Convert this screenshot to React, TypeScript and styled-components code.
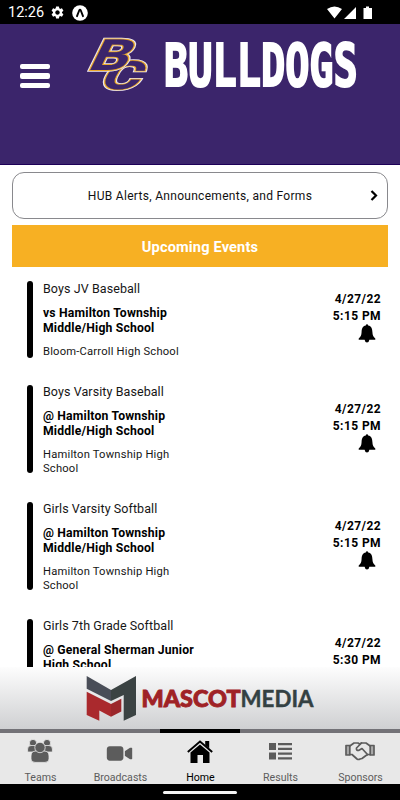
import React from "react";
import styled, { createGlobalStyle } from "styled-components";
import { MdSettings } from "react-icons/md";
import { IoIosVideocam } from "react-icons/io";

const GlobalStyle = createGlobalStyle`
  * { box-sizing: border-box; }
  body { margin: 0; background: #fff; }
`;

const Screen = styled.div`
  width: 400px;
  height: 800px;
  display: flex;
  flex-direction: column;
  overflow: hidden;
  background: #fff;
  color: #000;
  font-family: Roboto, "Liberation Sans", sans-serif;
`;

const StatusBar = styled.div`
  height: 24px;
  flex: none;
  display: flex;
  align-items: center;
  gap: 7px;
  padding: 1px 27px 0 8px;
  background: #000;
  color: #fff;
`;

const Clock = styled.span`
  width: 35px;
  font-size: 14.5px;
  line-height: 24px;
  white-space: nowrap;
`;

const StatusIcons = styled.svg`
  margin-left: auto;
`;

const Header = styled.header`
  height: 141px;
  flex: none;
  display: flex;
  align-items: flex-start;
  background: #3b256b;
  border-bottom: 1px solid #1d0057;
`;

const MenuButton = styled.button`
  display: flex;
  flex-direction: column;
  gap: 4px;
  margin: 39.5px 0 0 20px;
  padding: 0;
  border: 0;
  background: none;
`;

const MenuLine = styled.span`
  width: 30px;
  height: 5.6px;
  border-radius: 2px;
  background: #fff;
`;

const Brand = styled.svg`
  margin-left: 30px;
`;

const Content = styled.main`
  flex: 1;
  min-height: 0;
  overflow: hidden;
  padding: 7px 12px 0;
`;

const AlertLink = styled.div`
  height: 47px;
  display: flex;
  align-items: center;
  justify-content: center;
  border: 1px solid #89898d;
  border-radius: 12px;
  padding: 1px 9px 0 10px;
  font-size: 12px;
  letter-spacing: 0.3px;
  color: #111;
`;

const AlertLabel = styled.span`
  flex: 1;
  padding-left: 7px;
  text-align: center;
`;

const SectionTitle = styled.h2`
  height: 42px;
  margin: 6px 0 1px;
  background: #f7b023;
  color: #fff;
  text-align: center;
  font-size: 14.6px;
  font-weight: 700;
  line-height: 44px;
  letter-spacing: 0.15px;
`;

const EventRow = styled.article<{ $height: number }>`
  height: ${(p) => p.$height}px;
  display: flex;
  align-items: center;
  padding: 0 7px 0 15px;
`;

const EventBar = styled.div`
  width: 5.5px;
  height: 74.8%;
  border-radius: 3px;
  background: #000;
`;

const EventInfo = styled.div`
  width: 166px;
  align-self: flex-start;
  padding: 13.2px 0 0 10.5px;
`;

const Team = styled.div`
  font-size: 12.5px;
  line-height: 16px;
  letter-spacing: 0.08px;
  color: #161616;
`;

const Opponent = styled.div`
  margin-top: 9px;
  font-size: 12.2px;
  font-weight: 700;
  line-height: 15px;
  letter-spacing: 0.18px;
  white-space: pre-line;
`;

const Venue = styled.div`
  margin-top: 9px;
  font-size: 11.2px;
  line-height: 14px;
  letter-spacing: 0.2px;
  color: #161616;
  white-space: pre-line;
`;

const EventTime = styled.div`
  margin-left: auto;
  display: flex;
  flex-direction: column;
  align-items: flex-end;
  padding-bottom: 2px;
  font-size: 12px;
  font-weight: 700;
  line-height: 17px;
  letter-spacing: 0.42px;
`;

const BellIcon = styled.svg`
  margin: -1px 5px 3px 0;
`;

const Sponsor = styled.div`
  height: 62px;
  flex: none;
  background: linear-gradient(#fdfdfd, #cfd0d2);
`;

const TabBar = styled.nav`
  height: 55px;
  flex: none;
  display: grid;
  grid-template-columns: repeat(5, 1fr);
  background: #e8e8e8;
`;

const Tab = styled.div<{ $active?: boolean }>`
  display: flex;
  flex-direction: column;
  align-items: center;
  border-top: 4px solid ${(p) => (p.$active ? "#000" : "#737277")};
  color: ${(p) => (p.$active ? "#000" : "#5c5c5c")};
  font-size: 10.6px;
  letter-spacing: 0;
`;

const TabIcon = styled.div`
  height: 36px;
  display: flex;
  align-items: center;
`;

const WideTabIcon = styled(TabIcon)`
  margin-left: -2px;
  padding-top: 4px;
`;

const TabLabel = styled.span`
  padding-left: 1px;
  line-height: 17px;
`;

const SystemNav = styled.div`
  height: 16px;
  flex: none;
  display: flex;
  justify-content: center;
  align-items: center;
  background: #000;
`;

const HomePill = styled.div`
  width: 74px;
  height: 3px;
  margin-top: 1px;
  border-radius: 2px;
  background: #f4f4f4;
`;

const events = [
  { team: "Boys JV Baseball", opponent: "vs Hamilton Township\nMiddle/High School", venue: "Bloom-Carroll High School", time: "5:15 PM", height: 102.5 },
  { team: "Boys Varsity Baseball", opponent: "@ Hamilton Township\nMiddle/High School", venue: "Hamilton Township High\nSchool", time: "5:15 PM", height: 117 },
  { team: "Girls Varsity Softball", opponent: "@ Hamilton Township\nMiddle/High School", venue: "Hamilton Township High\nSchool", time: "5:15 PM", height: 117 },
  { team: "Girls 7th Grade Softball", opponent: "@ General Sherman Junior\nHigh School", venue: "General Sherman Junior\nHigh School", time: "5:30 PM", height: 117 },
];

const ExpoBadge = () => (
  <svg width="16" height="16" viewBox="0 0 16 16">
    <circle cx="8" cy="8" r="7.8" fill="#fff" />
    <path d="M5 11.200 7.200 5.500Q8 4 8.800 5.500L11 11.200" fill="none" stroke="#000" strokeWidth="1.900" strokeLinecap="round" strokeLinejoin="round" />
  </svg>
);

const Bell = () => (
  <BellIcon width="18" height="19" viewBox="0 0 18 19">
    <path d="M9 .3Q10 .3 10.200 1.400C13.500 2 14.300 4.800 14.400 8C14.500 11.500 15.500 13 17.300 14.400V15.800H.7V14.400C2.500 13 3.500 11.500 3.600 8C3.700 4.800 4.500 2 7.800 1.400Q8 .3 9 .3ZM6.600 15.800H11.400Q11 18.500 9 18.500Q7 18.500 6.600 15.800Z" />
  </BellIcon>
);

const Monogram = ({ letter, transform }: { letter: string; transform: string }) => (
  <g transform={transform} fontFamily="Roboto, sans-serif" fontWeight="700" fontSize="42" strokeLinejoin="miter">
    <text fill="#ece6ee" stroke="#ece6ee" strokeWidth="3.6">{letter}</text>
    <text fill="#eaa92c" stroke="#eaa92c" strokeWidth="2">{letter}</text>
    <text fill="#3b256b" stroke="#3b256b" strokeWidth="0.2">{letter}</text>
  </g>
);

const TeamsIcon = () => (
  <svg width="26" height="24" viewBox="0 0 26 24" fill="#5c5c5c" stroke="#e8e8e8" strokeWidth="0.8">
    <circle cx="6" cy="4" r="3.6" />
    <circle cx="20" cy="4" r="3.6" />
    <path d="M.6 13V10Q.6 6.500 4 6.500H9V13Z" />
    <path d="M25.400 13V10Q25.400 6.500 22 6.500H17V13Z" />
    <path d="M4 20V17Q4 12 9 12H17Q22 12 22 17V20Q22 23.400 18 23.400H8Q4 23.400 4 20Z" />
    <circle cx="13" cy="8.500" r="5.200" />
  </svg>
);

const HomeIcon = () => (
  <svg width="26" height="28" viewBox="0 -2 26 28">
    <path d="M3.500 24V13.500L13 5.500 22.500 13.500V24H16V16H10.500V24Z" />
    <path d="M.8 13 13 2.500 25.200 13" fill="none" stroke="#000" strokeWidth="1.900" />
    <path d="M18.200 2H22.200V9.500L18.200 6Z" />
  </svg>
);

const ResultsIcon = () => (
  <svg width="23" height="17" viewBox="0 0 23 17" fill="#5c5c5c">
    <path d="M0 0H7V7H0ZM0 9.500H7V16.500H0ZM9 0H23V2.200H9ZM9 4.800H23V7H9ZM9 9.500H23V11.700H9ZM9 14.300H23V16.500H9Z" />
  </svg>
);

const SponsorsIcon = () => (
  <svg width="30" height="20" viewBox="0 0 30 20" fill="none" stroke="#5c5c5c" strokeWidth="1.700" strokeLinejoin="round" strokeLinecap="round">
    <path d="M1 4.500H4.800V14H1ZM29 4.500H25.200V14H29Z" fill="#a9a9a9" />
    <path d="M4.800 5 9 2H13L14.500 3 16.500 2H21L25.200 5M4.800 13.500H7L12 18Q13.500 19 15 18L17 17.500 19 16 21 14.500 23 13.500H25.200" />
    <path d="M16.500 2 11.500 7Q11 9.500 13.500 9.500L17 7.500 22.500 13.500" />
  </svg>
);

export default function App() {
  return (
    <>
      <GlobalStyle />
      <Screen>
        <StatusBar>
          <Clock>12:26</Clock>
          <MdSettings size={15} />
          <ExpoBadge />
          <StatusIcons width="46" height="14" viewBox="0 0 46 14" fill="#fff">
            <path d="M0 3Q7.500-2 15 3L7.500 12.500ZM17 13 29 1V13ZM36.500 2H39V.5H42V2H45V13H36.500Z" />
          </StatusIcons>
        </StatusBar>
        <Header>
          <MenuButton aria-label="Menu">
            <MenuLine />
            <MenuLine />
            <MenuLine />
          </MenuButton>
          <Brand width="290" height="80" viewBox="80 24 290 80">
            <Monogram letter="C" transform="matrix(1.42 0 -0.48 0.93 98 89)" />
            <Monogram letter="B" transform="matrix(1.46 0 -0.5 1.02 86.500 70)" />
            <text transform="matrix(0.694 0 0 1 164 85.500)" fill="#fff" stroke="#fff" strokeWidth="2.200" strokeLinejoin="miter" fontFamily="DejaVu Sans Mono, monospace" fontWeight="700" fontSize="58">BULLDOGS</text>
          </Brand>
        </Header>
        <Content>
          <AlertLink>
            <AlertLabel>HUB Alerts, Announcements, and Forms</AlertLabel>
            <svg width="8" height="12" viewBox="0 0 8 12">
              <path d="M1.500 1 6 5.500 1.500 10" fill="none" stroke="#000" strokeWidth="2.200" />
            </svg>
          </AlertLink>
          <SectionTitle>Upcoming Events</SectionTitle>
          {events.map((e) => (
            <EventRow key={e.team} $height={e.height}>
              <EventBar />
              <EventInfo>
                <Team>{e.team}</Team>
                <Opponent>{e.opponent}</Opponent>
                <Venue>{e.venue}</Venue>
              </EventInfo>
              <EventTime>
                <span>4/27/22</span>
                <span>{e.time}</span>
                <Bell />
              </EventTime>
            </EventRow>
          ))}
        </Content>
        <Sponsor>
          <svg width="400" height="62" viewBox="0 667 400 62">
            <path d="M86.700 676 111 690v11L86.700 688.700Z" fill="#494d57" />
            <path d="M111 690 136 676V715L123.700 720.700V695L111 701Z" fill="#3b4343" />
            <path d="M86.700 691.700 111 704V716.700L99.300 710.500V720.700L86.700 715Z" fill="#aa292d" />
            <path d="M111 704 121.300 698.700V711.500L111 716.700Z" fill="#9b272b" />
            <g fontSize="22.500" fontFamily="Lato, sans-serif">
              <text x="141.500" y="706.700" fill="#9f2226" stroke="#9f2226" strokeWidth="0.900" fontWeight="900" textLength="99" lengthAdjust="spacingAndGlyphs">MASCOT</text>
              <text x="240.500" y="706.700" fill="#344143" stroke="#344143" strokeWidth="0.400" fontWeight="700" textLength="73" lengthAdjust="spacingAndGlyphs">MEDIA</text>
            </g>
          </svg>
        </Sponsor>
        <TabBar>
          <Tab><TabIcon><TeamsIcon /></TabIcon><TabLabel>Teams</TabLabel></Tab>
          <Tab><WideTabIcon><IoIosVideocam size={29} /></WideTabIcon><TabLabel>Broadcasts</TabLabel></Tab>
          <Tab $active><TabIcon><HomeIcon /></TabIcon><TabLabel>Home</TabLabel></Tab>
          <Tab><TabIcon><ResultsIcon /></TabIcon><TabLabel>Results</TabLabel></Tab>
          <Tab><TabIcon><SponsorsIcon /></TabIcon><TabLabel>Sponsors</TabLabel></Tab>
        </TabBar>
        <SystemNav><HomePill /></SystemNav>
      </Screen>
    </>
  );
}
